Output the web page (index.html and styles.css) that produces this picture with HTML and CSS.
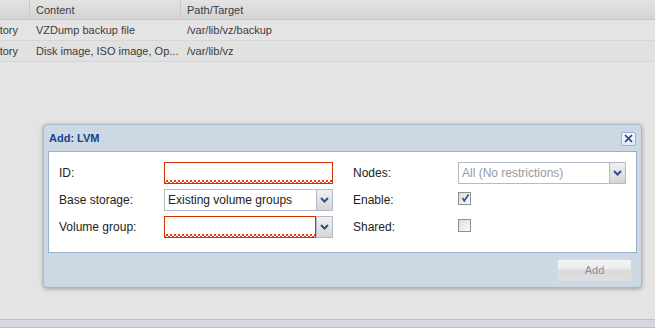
FILE: index.html
```html
<!DOCTYPE html>
<html lang="en">
<head>
    <meta charset="UTF-8">
    <title>Add: LVM</title>
    <link rel="stylesheet" href="styles.css">
</head>
<body>
    <div class="page">
        <div class="grid">
            <div class="grid-head">
                <div class="cell col-type"></div>
                <div class="cell col-content">Content</div>
                <div class="cell col-path">Path/Target</div>
            </div>
            <div class="grid-row">
                <div class="cell col-type"><span class="clip">Directory</span></div>
                <div class="cell col-content">VZDump backup file</div>
                <div class="cell col-path">/var/lib/vz/backup</div>
            </div>
            <div class="grid-row alt">
                <div class="cell col-type"><span class="clip">Directory</span></div>
                <div class="cell col-content">Disk image, ISO image, Op...</div>
                <div class="cell col-path">/var/lib/vz</div>
            </div>
        </div>
        <div class="fill"></div>
        <div class="statusbar"></div>
    </div>

    <div class="window">
        <div class="win-header">
            <span class="win-title">Add: LVM</span>
            <span class="tool-close">
                <svg width="9" height="9" viewBox="0 0 9 9"><path d="M1 1L8 8M8 1L1 8" stroke="#15428b" stroke-width="1.6" fill="none"/></svg>
            </span>
        </div>
        <div class="win-body">
            <div class="col">
                <div class="row">
                    <label class="lbl">ID:</label>
                    <div class="field invalid"></div>
                </div>
                <div class="row">
                    <label class="lbl">Base storage:</label>
                    <div class="combo">
                        <div class="combo-text">Existing volume groups</div>
                        <div class="trigger"><svg width="9" height="6" viewBox="0 0 9 6"><path d="M1 1L4.5 4.5L8 1" stroke="#2d4f8a" stroke-width="2" fill="none"/></svg></div>
                    </div>
                </div>
                <div class="row">
                    <label class="lbl">Volume group:</label>
                    <div class="combo">
                        <div class="combo-text invalid"></div>
                        <div class="trigger"><svg width="9" height="6" viewBox="0 0 9 6"><path d="M1 1L4.5 4.5L8 1" stroke="#2d4f8a" stroke-width="2" fill="none"/></svg></div>
                    </div>
                </div>
            </div>
            <div class="col">
                <div class="row">
                    <label class="lbl">Nodes:</label>
                    <div class="combo wide">
                        <div class="combo-text empty">All (No restrictions)</div>
                        <div class="trigger"><svg width="9" height="6" viewBox="0 0 9 6"><path d="M1 1L4.5 4.5L8 1" stroke="#2d4f8a" stroke-width="2" fill="none"/></svg></div>
                    </div>
                </div>
                <div class="row">
                    <label class="lbl">Enable:</label>
                    <span class="check">
                        <svg width="10" height="10" viewBox="0 0 10 10"><path d="M2.5 5L4.3 8L8.5 1.5" stroke="#3050a0" stroke-width="1.7" fill="none"/></svg>
                    </span>
                </div>
                <div class="row">
                    <label class="lbl">Shared:</label>
                    <span class="check"></span>
                </div>
            </div>
        </div>
        <div class="win-footer">
            <button class="btn" disabled>Add</button>
        </div>
    </div>
</body>
</html>
```

FILE: styles.css
```css
body {
    margin: 0;
    font-family: 'Liberation Sans', Arial, sans-serif;
    font-size: 12px;
    color: #222;
    background-color: #e4e4e4;
}
.page {
    display: flex;
    flex-direction: column;
    height: 328px;
    overflow: hidden;
}
.grid {
    font-size: 11px;
}
.grid-head,
.grid-row {
    display: flex;
    height: 20px;
    align-items: center;
    box-sizing: border-box;
}
.grid-head {
    background: linear-gradient(#e3e3e3, #d4d4d4);
    border-bottom: 1px solid #c4c4c4;
    color: #3c3c3c;
}
.grid-row {
    height: 21px;
    background-color: #e4e4e4;
    border-bottom: 1px solid #d6d6d6;
    color: #3c3c3c;
}
.grid-row.alt {
    background-color: #e1e1e1;
}
.cell {
    height: 100%;
    display: flex;
    align-items: center;
    box-sizing: border-box;
    padding-left: 6px;
    white-space: nowrap;
    overflow: hidden;
}
.col-type {
    width: 30px;
    padding-left: 0;
}
.col-content {
    width: 151px;
}
.col-path {
    flex: 1;
}
.grid-head .col-type,
.grid-head .col-content {
    border-right: 1px solid #cacaca;
}
.clip {
    margin-left: -26px;
}
.fill {
    flex: 1;
}
.statusbar {
    height: 7px;
    background-color: #d5d9df;
    border-top: 1px solid #b9c1cc;
    border-bottom: 1px solid #b9c1cc;
}

/* window */
.window {
    position: absolute;
    left: 43px;
    top: 124px;
    width: 599px;
    box-sizing: border-box;
    padding: 0 4px;
    background-color: #cdd8e5;
    border: 1px solid #a6b8cd;
    border-radius: 4px;
    box-shadow: 0 1px 4px rgba(0, 0, 0, 0.3);
}
.win-header {
    height: 26px;
    display: flex;
    align-items: center;
    justify-content: space-between;
    padding-left: 1px;
}
.win-title {
    font-size: 11px;
    font-weight: bold;
    color: #15428b;
}
.tool-close {
    width: 13px;
    height: 12px;
    margin-right: 1px;
    margin-top: 1px;
    display: flex;
    align-items: center;
    justify-content: center;
    border: 1px solid #99b4d9;
    border-radius: 2px;
    background: linear-gradient(#f6f9fd, #e1eaf5);
}
.win-body {
    display: flex;
    gap: 20px;
    height: 102px;
    box-sizing: border-box;
    padding: 10px 10px 0 10px;
    background-color: #ffffff;
    border: 1px solid #99b0cc;
}
.col {
    display: flex;
    flex-direction: column;
    gap: 5px;
}
.row {
    display: flex;
    align-items: center;
    height: 22px;
}
.lbl {
    width: 105px;
}
.field,
.combo {
    width: 169px;
    height: 22px;
    box-sizing: border-box;
}
.field {
    border: 1px solid #b5b8c8;
}
.combo {
    display: flex;
}
.combo.wide {
    width: 168px;
}
.combo-text {
    flex: 1;
    display: flex;
    align-items: center;
    padding-left: 3px;
    border: 1px solid #b5b8c8;
    border-right: none;
    white-space: nowrap;
    overflow: hidden;
}
.combo-text.empty {
    color: #999;
}
.invalid {
    border: 1px solid #cc3300;
    background-color: #fff;
    background-image:
        linear-gradient(45deg, transparent 45%, #e0401a 45%, #e0401a 65%, transparent 65%),
        linear-gradient(-45deg, transparent 45%, #e0401a 45%, #e0401a 65%, transparent 65%);
    background-size: 4px 3px;
    background-repeat: repeat-x;
    background-position: left bottom;
}
.combo-text.invalid {
    border-right: 1px solid #cc3300;
}
.trigger {
    width: 17px;
    display: flex;
    align-items: center;
    justify-content: center;
    border: 1px solid #b5b8c8;
    background: linear-gradient(#f0f0f0, #d6d6d6);
    box-sizing: border-box;
}
.check {
    width: 13px;
    height: 13px;
    margin-top: -4px;
    box-sizing: border-box;
    border: 1px solid #8f8f8f;
    background: linear-gradient(135deg, #dcdcdc, #fafafa);
    display: flex;
    align-items: center;
    justify-content: center;
}
.win-footer {
    display: flex;
    justify-content: flex-end;
    padding: 6px 5px 6px 0;
}
.btn {
    width: 75px;
    height: 22px;
    font-family: inherit;
    font-size: 11px;
    color: #8c8f9c;
    border: 1px solid #d6dbe2;
    border-radius: 2px;
    background: linear-gradient(#f3f3f3 0%, #ececec 45%, #dadada 50%, #dedede 100%);
}
```
